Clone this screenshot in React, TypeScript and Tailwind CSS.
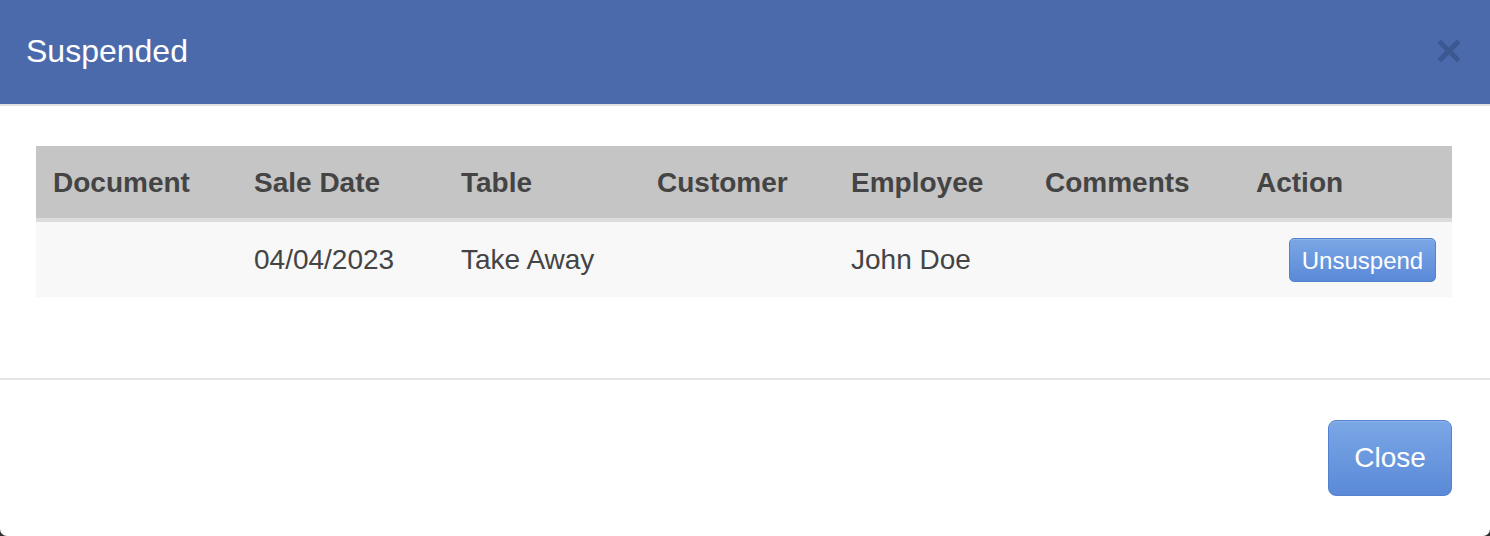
const columns = [
  { label: 'Document', w: 'w-[202px]', pad: 'pl-[17px] pr-[16px]' },
  { label: 'Sale Date', w: 'w-[207px]', pad: 'px-[16px]' },
  { label: 'Table', w: 'w-[196px]', pad: 'px-[16px]' },
  { label: 'Customer', w: 'w-[194px]', pad: 'px-[16px]' },
  { label: 'Employee', w: 'w-[194px]', pad: 'px-[16px]' },
  { label: 'Comments', w: 'w-[211px]', pad: 'px-[16px]' },
  { label: 'Action', w: 'w-[212px]', pad: 'px-[16px]' },
];

const rows = [
  { document: '', saleDate: '04/04/2023', table: 'Take Away', customer: '', employee: 'John Doe', comments: '' },
];

const btnClass =
  'text-white bg-gradient-to-b from-[#7ba7e6] to-[#5a89d7] border border-[#5281d0] shadow-[inset_0_1px_0_rgba(255,255,255,0.15)]';

export default function App() {
  return (
    <div className="h-[536px] w-[1490px] bg-[#2e2e2e] font-['Liberation_Sans',Arial,sans-serif]">
      <div className="h-full bg-white rounded-b-[7px] flex flex-col">
        {/* header */}
        <div className="h-[104px] bg-[#4b6aab] border-b-2 border-[#e0e0e0] box-content flex items-center justify-between pl-[26px] pr-[30px]">
          <h4 className="text-[32px] text-white leading-none pb-[2px]">Suspended</h4>
          <button className="text-[#3c5892] mb-[2px]" aria-label="close">
            <svg width="22" height="22" viewBox="0 0 22 22">
              <path d="M3 3 L19 19 M19 3 L3 19" stroke="currentColor" strokeWidth="5" strokeLinecap="square" />
            </svg>
          </button>
        </div>

        {/* body */}
        <div className="pl-[36px] pr-[38px] pt-[40px] pb-[81px] border-b-2 border-[#e5e5e5]">
          <table className="w-full table-fixed border-separate border-spacing-0 text-[28px] text-[#444]">
            <thead>
              <tr className="bg-[#c5c5c5]">
                {columns.map((c) => (
                  <th key={c.label} className={`${c.w} ${c.pad} h-[76px] pt-[2px] border-b-4 border-[#dcdcdc] text-left font-bold`}>
                    {c.label}
                  </th>
                ))}
              </tr>
            </thead>
            <tbody>
              {rows.map((r, i) => (
                <tr key={i} className="bg-[#f8f8f8]">
                  <td className={`${columns[0].pad} h-[75px]`}>{r.document}</td>
                  <td className="px-[16px]">{r.saleDate}</td>
                  <td className="px-[16px]">{r.table}</td>
                  <td className="px-[16px]">{r.customer}</td>
                  <td className="px-[16px]">{r.employee}</td>
                  <td className="px-[16px]">{r.comments}</td>
                  <td className="pr-[16px] text-right">
                    <button className={`${btnClass} h-[44px] w-[147px] rounded-[5px] text-[24px] leading-none pt-[2px]`}>
                      Unsuspend
                    </button>
                  </td>
                </tr>
              ))}
            </tbody>
          </table>
        </div>

        {/* footer */}
        <div className="flex justify-end pr-[38px] pt-[40px]">
          <button className={`${btnClass} h-[76px] w-[124px] rounded-[8px] text-[28px] leading-none`}>Close</button>
        </div>
      </div>
    </div>
  );
}
